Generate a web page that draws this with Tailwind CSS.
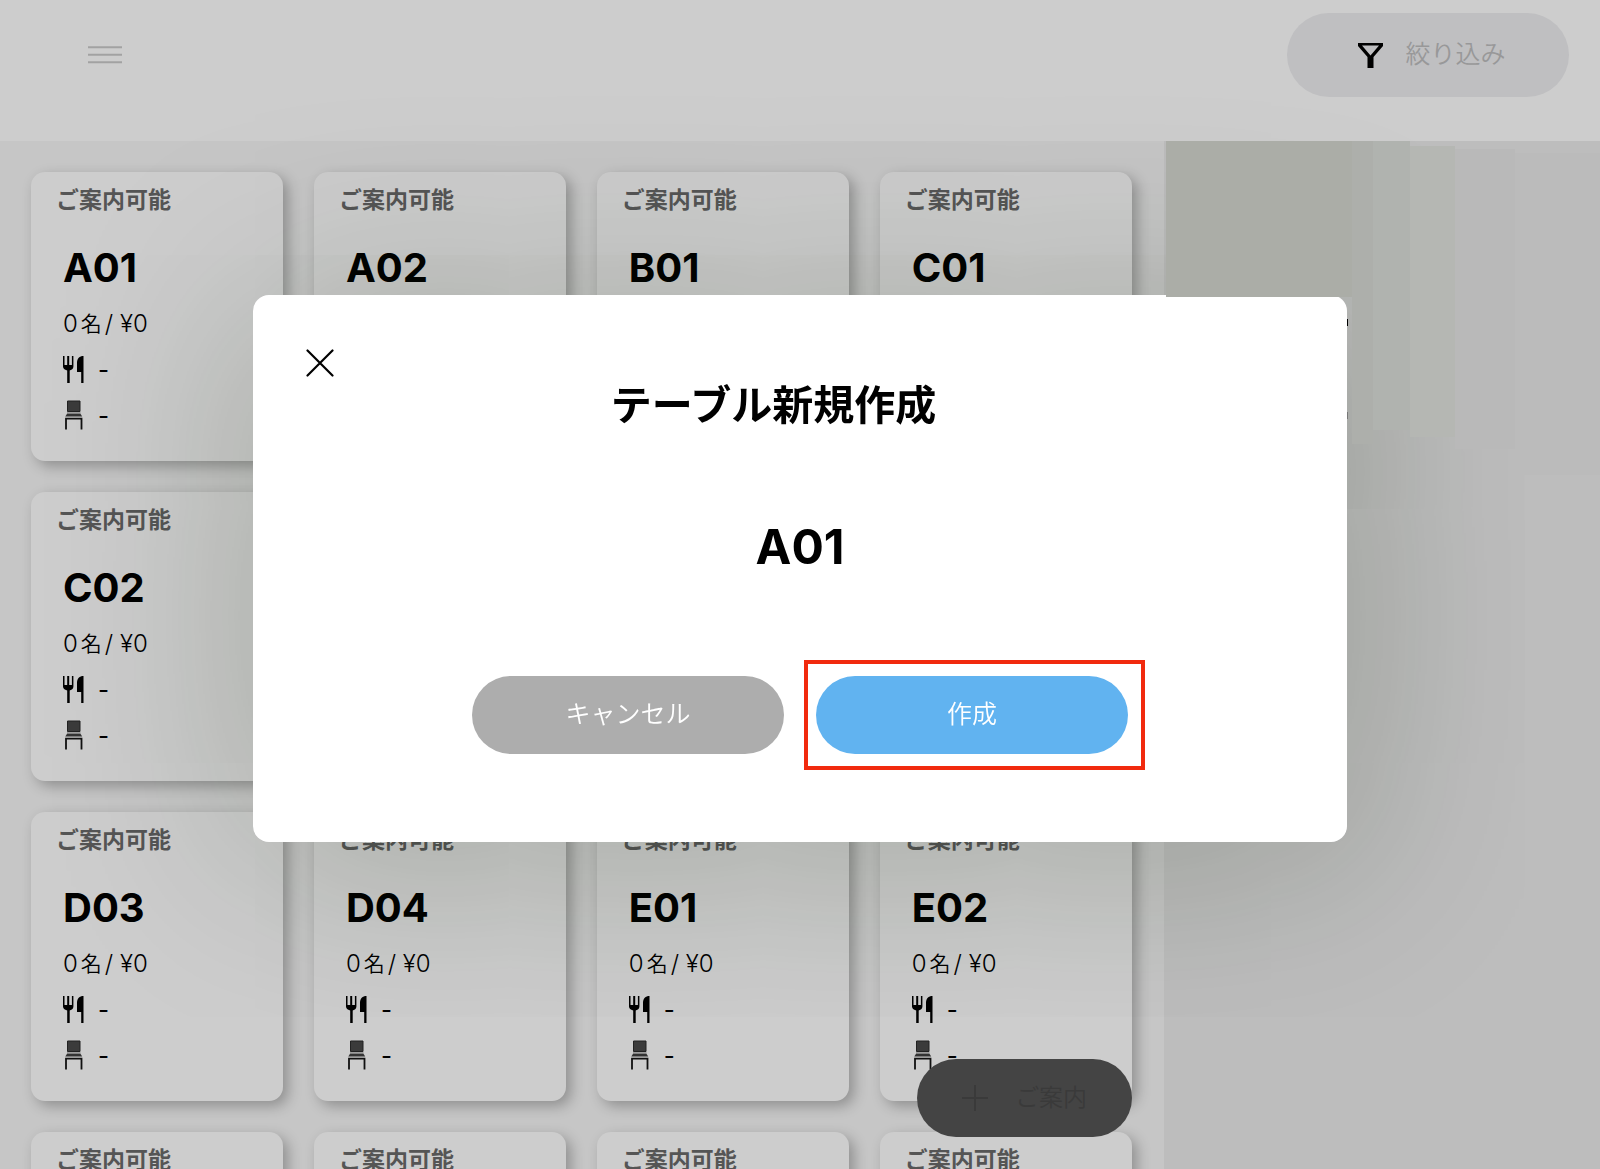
<!DOCTYPE html>
<html lang="ja">
<head>
    <meta charset="UTF-8">
    <meta name="viewport" content="width=device-width, initial-scale=1.0">
    <title>テーブル新規作成</title>
    <script src="https://cdn.jsdelivr.net/npm/@tailwindcss/browser@4"></script>
</head>
<body class="h-screen overflow-hidden flex flex-col bg-[#cdcdcd] text-black font-['Inter','Noto_Sans_CJK_JP',sans-serif]">
    <!-- Header -->
    <header class="h-[141px] shrink-0 flex items-start justify-between pt-[13px] pl-[88px] pr-[31px]">
        <button type="button" aria-label="メニュー" class="h-[84px] flex items-center">
            <svg class="w-[34px] h-5" viewBox="0 0 34 20" fill="none" stroke="#a2a2a2" stroke-width="2">
                <path d="M0 2.2h34M0 9.7h34M0 17.2h34" />
            </svg>
        </button>
        <button type="button" class="w-[282px] h-[84px] rounded-full bg-[#bfbfc1] flex items-center justify-center gap-[22px] pl-2 text-[25px] font-[350] text-[#989899]">
            <svg class="w-[25px] h-[25px]" viewBox="0 0 25 25">
                <path d="M0 0h25v3L15.500 14V25H9.500V14L0 3zM4 2.600l8.500 10L21 2.600z" fill="#000" fill-rule="evenodd" />
            </svg>
            絞り込み
        </button>
    </header>

    <div class="flex-1 min-h-0 grid grid-cols-[8fr_3fr]">
        <!-- Table list -->
        <main class="relative min-h-0 overflow-hidden bg-[#c6c6c6]">
            <div id="tables" class="grid grid-cols-4 gap-[31px] pt-[31px] pl-[31px] pr-8"></div>
            <button type="button" class="absolute right-8 bottom-8 w-[215px] h-[78px] rounded-full bg-[#444444] text-[#3a3a3a] text-2xl font-[350] flex items-center justify-center gap-[26px]">
                <svg class="w-7 h-7" viewBox="0 0 28 28" fill="none" stroke="currentColor" stroke-width="2">
                    <path d="M14 1v26M1 14h26" />
                </svg>
                ご案内
            </button>
        </main>
        <aside class="bg-[#bdbdbd]"></aside>
    </div>

    <template id="card">
        <article class="h-[289px] rounded-[14px] bg-[#cdcdcd] shadow-[5px_5px_14px_rgba(0,0,0,0.28)] pt-3 px-[25px]">
            <p class="text-[23px] leading-8 font-bold text-[#555555]">ご案内可能</p>
            <div class="pl-[7px]">
                <h2 class="mt-7 text-[40px] leading-12 font-bold"></h2>
                <p class="mt-4 flex items-center text-2xl leading-8 font-[350]">0<span class="mx-[3px] text-[21px]">名</span>/ ¥0</p>
                <p class="mt-[14px] h-8 flex items-center gap-[14px] text-2xl">
                    <svg class="w-[21px] h-7" viewBox="0 0 21 28">
                        <path d="M0 0h1.500v9h2.700V0h2v9h2.700V0h1.500v10.500c0 2-1.200 3.200-3.700 4V27H4.200V14.500C1.500 13.700 0 12.500 0 10.500zM20.500 0v27h-2.300V16H14V7c0-4.500 2.500-7 6.500-7z" />
                    </svg>
                    -
                </p>
                <p class="mt-[14px] h-8 flex items-center gap-[14px] text-2xl">
                    <svg class="w-[21px] h-8" viewBox="0 0 21 32">
                        <path d="M4.500 1h12.500v10.500H4.500z" fill="#3b3b3b" stroke="#222" />
                        <path d="M4 12.500h13.500v1H4z" fill="#6f6f6f" />
                        <path d="M4 13.800h13.500l1.700 2.700H2.300z" fill="#333" />
                        <path d="M3 29.500V18.700h15.500v10.800" fill="none" stroke="#111" stroke-width="1.800" />
                    </svg>
                    -
                </p>
            </div>
        </article>
    </template>

    <!-- Modal -->
    <div class="fixed inset-0 flex items-center justify-center pb-8">
        <div role="dialog" aria-modal="true" aria-labelledby="modal-title" class="relative w-full max-w-[1094px] h-[547px] rounded-2xl bg-white shadow-[0_10px_200px_rgba(16,34,8,0.26)] flex flex-col items-center">
            <button type="button" aria-label="閉じる" class="absolute left-[53px] top-[54px]">
                <svg class="w-7 h-7" viewBox="0 0 28 28" fill="none" stroke="#000" stroke-width="2.200" stroke-linecap="round">
                    <path d="M1.500 1.500l25 25M26.500 1.500l-25 25" />
                </svg>
            </button>
            <h1 id="modal-title" class="mt-20 mr-[53px] text-[41px] leading-[60px] font-bold">テーブル新規作成</h1>
            <p class="mt-[82px] text-5xl leading-[60px] font-bold">A01</p>
            <div class="mt-[83px] flex items-center gap-5">
                <button type="button" class="w-[312px] h-[78px] rounded-full bg-[#adadad] text-[25px] font-[350] text-white">キャンセル</button>
                <div class="-mr-[17px] border-4 border-[#f12a0e] px-2 pr-[13px] py-3">
                    <button type="button" class="w-[312px] h-[78px] rounded-full bg-[#61b3f0] text-[25px] font-[350] text-white">作成</button>
                </div>
            </div>
        </div>
    </div>

    <!-- Masked strip over the right column -->
    <div class="fixed top-[141px] left-[1166px] right-0 flex items-start pointer-events-none" aria-hidden="true">
        <div class="w-[186px] h-[156px] bg-[#abada7]"></div>
        <div class="w-[21px] h-[303px] bg-[#adafab]"></div>
        <div class="w-[37px] h-[289px] bg-[#b0b3af]"></div>
        <div class="w-[45px] h-[291px] mt-[5px] bg-[#b5b7b3]"></div>
        <div class="w-[60px] h-[300px] mt-2 bg-[#b9b9b9]"></div>
        <div class="flex-1 h-[322px] mt-3 bg-[#bbbbbb]"></div>
        <span class="absolute left-[181px] top-[178px] w-px h-[7px] bg-black"></span>
        <span class="absolute left-[181px] top-[271px] w-px h-[7px] bg-[#777]"></span>
    </div>

    <script>
        const names = ['A01', 'A02', 'B01', 'C01', 'C02', 'C03', 'D01', 'D02', 'D03', 'D04', 'E01', 'E02', 'E03', 'E04', 'F01', 'F02'];
        const list = document.getElementById('tables');
        const template = document.getElementById('card');

        names.forEach(name => {
            const card = template.content.cloneNode(true);
            card.querySelector('h2').innerText = name;
            list.appendChild(card);
        });
    </script>
</body>
</html>
